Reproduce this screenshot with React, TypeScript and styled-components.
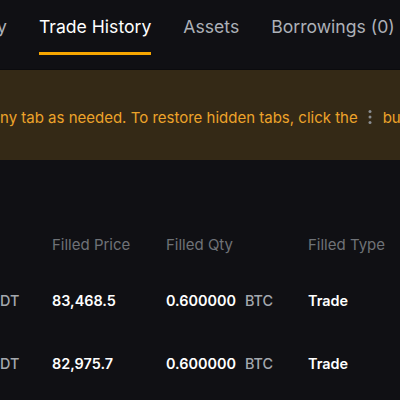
import React from 'react';
import styled, { createGlobalStyle } from 'styled-components';

const GlobalStyle = createGlobalStyle`
    html, body {
        margin: 0;
        padding: 0;
        background: #101014;
    }
    body {
        font-family: Inter, "Noto Sans", sans-serif;
        overflow: hidden;
    }
`;

const Page = styled.div`
    width: 400px;
    height: 400px;
    overflow: hidden;
    background: #101014;
`;

const TabBar = styled.nav`
    display: flex;
    align-items: flex-start;
    gap: 32px;
    height: 69px;
    margin-left: -105px;
    border-bottom: 1px solid #0b0b0e;
`;

const Tab = styled.div<{ $active?: boolean }>`
    padding-top: 14px;
    height: 55px;
    box-sizing: border-box;
    white-space: nowrap;
    font-size: 17.6px;
    line-height: 26px;
    color: ${props => props.$active ? '#ffffff' : '#adb1b8'};
    border-bottom: 3px solid ${props => props.$active ? '#f7a600' : 'transparent'};
`;

const Banner = styled.div`
    display: flex;
    align-items: center;
    height: 90px;
    padding-top: 4px;
    box-sizing: border-box;
    background: #342916;
    color: #eda32a;
    font-size: 15px;
    white-space: nowrap;
`;

const MoreDots = styled.svg`
    margin: 0 11px 0 10px;
    flex-shrink: 0;
`;

const Table = styled.div`
    display: grid;
    grid-template-columns: 52px 114px 142px 1fr;
    padding-top: 75px;
`;

const HeadCell = styled.div`
    font-size: 15px;
    line-height: 20px;
    color: #6f7277;
    white-space: nowrap;
    height: 34px;
`;

const Cell = styled.div`
    display: flex;
    align-items: center;
    gap: 9px;
    height: 63px;
    font-size: 14.4px;
    font-weight: 600;
    color: #ffffff;
    white-space: nowrap;
`;

const Unit = styled.span`
    color: #a4a8ae;
    font-weight: 500;
`;

const rows = [
    { price: '83,468.5', qty: '0.600000', type: 'Trade' },
    { price: '82,975.7', qty: '0.600000', type: 'Trade' },
];

const App: React.FC = () => {
    return (
        <Page>
            <GlobalStyle />
            <TabBar>
                <Tab>Order History</Tab>
                <Tab $active>Trade History</Tab>
                <Tab>Assets</Tab>
                <Tab>Borrowings (0)</Tab>
            </TabBar>
            <Banner>
                ny tab as needed. To restore hidden tabs, click the
                <MoreDots width="4" height="16" viewBox="0 0 4 16">
                    <circle cx="2" cy="2.5" r="1.5" fill="#8a8d92" />
                    <circle cx="2" cy="8" r="1.5" fill="#8a8d92" />
                    <circle cx="2" cy="13.5" r="1.5" fill="#8a8d92" />
                </MoreDots>
                button
            </Banner>
            <Table>
                <HeadCell />
                <HeadCell>Filled Price</HeadCell>
                <HeadCell>Filled Qty</HeadCell>
                <HeadCell>Filled Type</HeadCell>
                {rows.map((row, i) => (
                    <React.Fragment key={`row-${i}`}>
                        <Cell><Unit>DT</Unit></Cell>
                        <Cell>{row.price}</Cell>
                        <Cell>{row.qty}<Unit>BTC</Unit></Cell>
                        <Cell>{row.type}</Cell>
                    </React.Fragment>
                ))}
            </Table>
        </Page>
    );
}

export default App;
